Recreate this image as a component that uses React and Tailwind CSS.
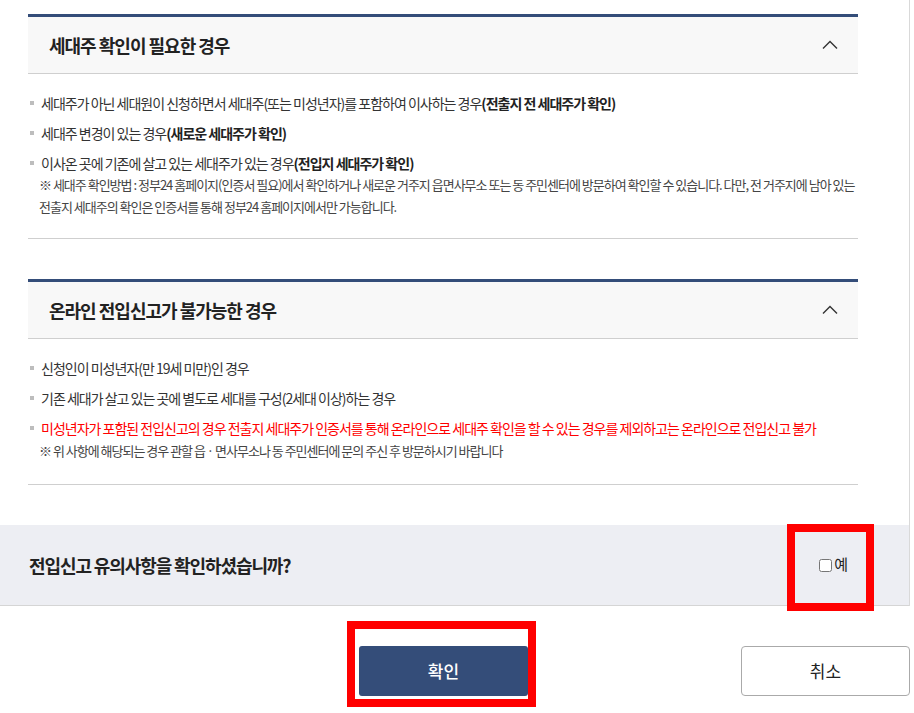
import React from 'react'

const FONT = { fontFamily: '"Noto Sans CJK KR", "Noto Sans", sans-serif' }

function Chevron() {
  return (
    <svg width="16" height="10" viewBox="0 0 16 10" className="block">
      <polyline points="1,8.5 8,1.5 15,8.5" fill="none" stroke="#333" strokeWidth="1.4" />
    </svg>
  )
}

function Item({ children, red }) {
  return (
    <li className="flex items-start">
      <span className="w-[4px] h-[4px] bg-[#bdbdbd] mt-[9px] ml-[2px] mr-[7px] flex-none" />
      <span className={`text-[14px] leading-[22px] tracking-[-1px] ${red ? 'text-[#ff0000]' : 'text-[#333]'}`}>{children}</span>
    </li>
  )
}

function Note({ children }) {
  return <p className="pl-[11px] text-[13px] leading-[22px] tracking-[-1px] text-[#444]">{children}</p>
}

function Section({ title, children, bottomPad }) {
  return (
    <section className="border-t-[3px] border-[#344d79]">
      <div className="h-[57px] bg-[#f8f8f8] border-b border-[#cfcfcf] flex items-center justify-between pl-[21px] pr-[20px]">
        <h3 className="text-[18px] font-bold tracking-[-1px] text-[#222]">{title}</h3>
        <Chevron />
      </div>
      <div className={`pt-[18px] ${bottomPad} border-b border-[#cfcfcf]`}>{children}</div>
    </section>
  )
}

export default function App() {
  return (
    <div className="relative w-[914px] h-[713px] bg-white overflow-hidden" style={FONT}>
      <div className="w-[910px] border-r border-[#d9d9d9]">
        <div className="pl-[28px] pr-[51px] pt-[14px] pb-[40px] flex flex-col gap-[40px]">
          <Section title="세대주 확인이 필요한 경우" bottomPad="pb-[20px]">
            <ul className="flex flex-col gap-[8px]">
              <Item>세대주가 아닌 세대원이 신청하면서 세대주(또는 미성년자)를 포함하여 이사하는 경우<b className="font-bold text-[#222]">(전출지 전 세대주가 확인)</b></Item>
              <Item>세대주 변경이 있는 경우<b className="font-bold text-[#222]">(새로운 세대주가 확인)</b></Item>
              <li>
                <Item>이사온 곳에 기존에 살고 있는 세대주가 있는 경우<b className="font-bold text-[#222]">(전입지 세대주가 확인)</b></Item>
                <Note>※ 세대주 확인방법 : 정부24 홈페이지(인증서 필요)에서 확인하거나 새로운 거주지 읍면사무소 또는 동 주민센터에 방문하여 확인할 수 있습니다. 다만, 전 거주지에 남아 있는 전출지 세대주의 확인은 인증서를 통해 정부24 홈페이지에서만 가능합니다.</Note>
              </li>
            </ul>
          </Section>
          <Section title="온라인 전입신고가 불가능한 경우" bottomPad="pb-[22px]">
            <ul className="flex flex-col gap-[8px]">
              <Item>신청인이 미성년자(만 19세 미만)인 경우</Item>
              <Item>기존 세대가 살고 있는 곳에 별도로 세대를 구성(2세대 이상)하는 경우</Item>
              <li>
                <Item red>미성년자가 포함된 전입신고의 경우 전출지 세대주가 인증서를 통해 온라인으로 세대주 확인을 할 수 있는 경우를 제외하고는 온라인으로 전입신고 불가</Item>
                <div className="pt-[1px]">
                  <Note>※ 위 사항에 해당되는 경우 관할 읍 · 면사무소나 동 주민센터에 문의 주신 후 방문하시기 바랍니다</Note>
                </div>
              </li>
            </ul>
          </Section>
        </div>
        <div className="h-[81px] bg-[#edeef3] border-b border-[#d5d5d5] flex items-center justify-between pl-[29px] pr-[61px]">
          <p className="text-[18px] font-bold tracking-[-1.1px] text-[#222]">전입신고 유의사항을 확인하셨습니까?</p>
          <label className="flex items-center gap-[2px] text-[15px] text-[#222]">
            <input type="checkbox" className="m-0 w-[13px] h-[13px]" />
            <span className="leading-none -mt-[3px]">예</span>
          </label>
        </div>
      </div>
      <div className="w-[910px] flex pt-[40px] pl-[359px]">
        <button className="w-[169px] h-[50px] rounded-[3px] bg-[#344d79] text-white text-[17px] font-medium">확인</button>
        <button className="ml-auto w-[169px] h-[50px] rounded-[4px] border border-[#aaa] bg-white text-[#222] text-[17px]">취소</button>
      </div>

      <div className="absolute left-[787px] top-[524px] w-[87px] h-[87px] border-[8px] border-[#ff0000]" />
      <div className="absolute left-[347px] top-[621px] w-[189px] h-[86px] border-[8px] border-[#ff0000]" />
    </div>
  )
}
